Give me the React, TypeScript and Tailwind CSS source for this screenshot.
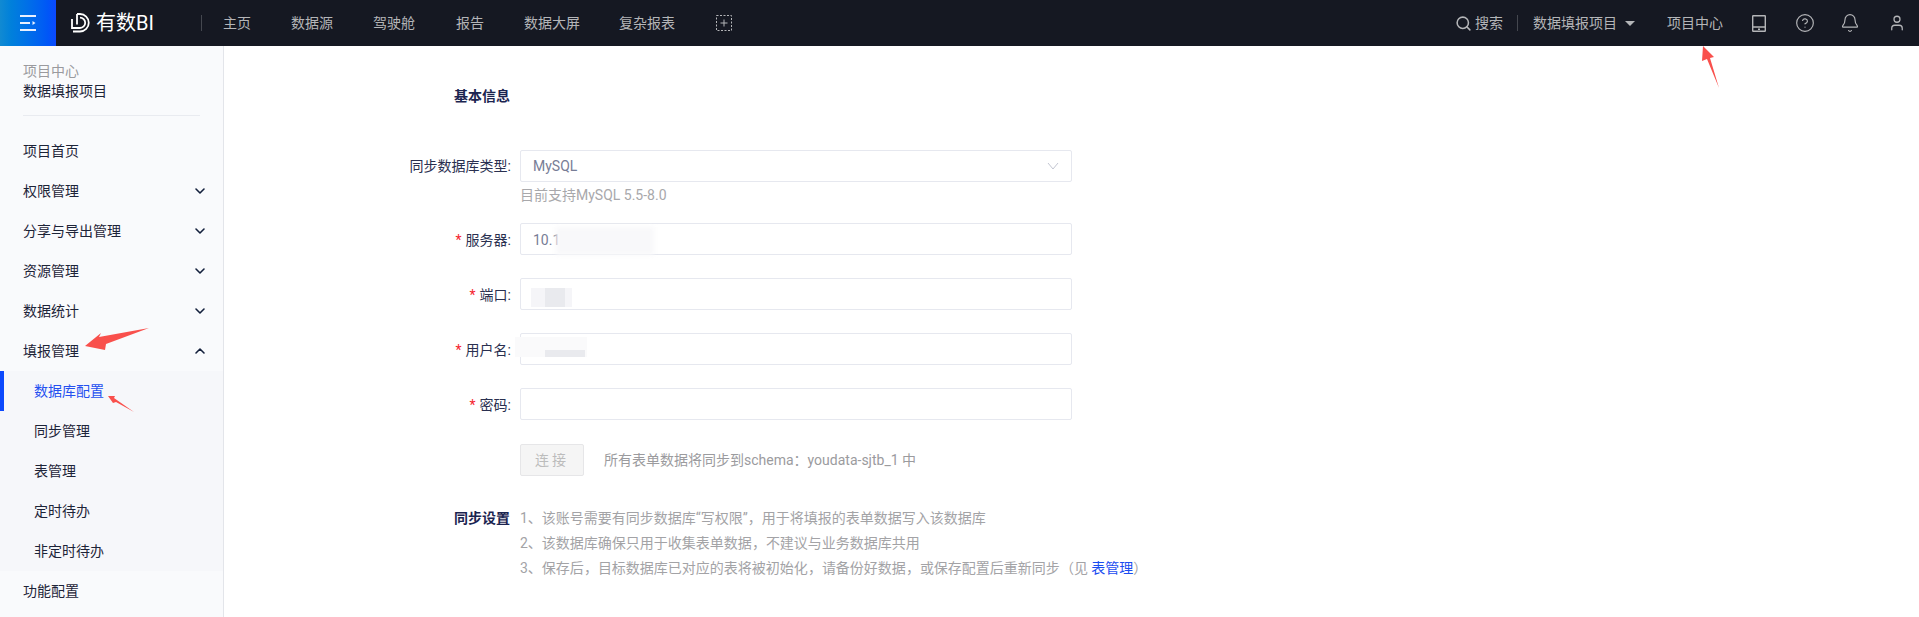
import { Bell, ChevronDown, ChevronUp, CircleHelp, Search, User } from "lucide-react";

const navItems = [
  { label: "主页", className: "ml-[21px] w-[68px]" },
  { label: "数据源", className: "w-[82px]" },
  { label: "驾驶舱", className: "w-[83px]" },
  { label: "报告", className: "w-[68px]" },
  { label: "数据大屏", className: "w-[95px]" },
  { label: "复杂报表", className: "w-[97px]" },
];

const menuItems = ["权限管理", "分享与导出管理", "资源管理", "数据统计"];
const subItems = ["同步管理", "表管理", "定时待办", "非定时待办"];

// 全角标点
const COMMA = "\uFF0C";
const COLON = "\uFF1A";
const LEFT_PAREN = "\uFF08";
const RIGHT_PAREN = "\uFF09";

function Header() {
  return (
    <header className="flex h-[46px] shrink-0 items-center bg-[#151822] text-[14px] text-[#b4b5b8]">
      <div className="flex h-full w-[56px] items-center justify-center bg-gradient-to-r from-[#118ad2] to-[#0c49fd]">
        <svg width="16" height="16" viewBox="0 0 16 16" fill="#e8f0ff">
          <rect x="0" y="0" width="16" height="2" />
          <rect x="0" y="7" width="10" height="2" />
          <path d="M12.5 6l3 2-3 2z" />
          <rect x="0" y="14" width="16" height="2" />
        </svg>
      </div>
      <svg className="ml-[15px]" width="20" height="20" viewBox="0 0 20 20" fill="none" stroke="#fff" strokeWidth="1.8">
        <path d="M6 1h3a8.5 8.5 0 0 1 0 17.5H2" />
        <path d="M1 6v9h8a5.2 5.2 0 0 0 0-10.4" />
        <path d="M6 1v10.5" />
      </svg>
      <span className="ml-[5px] text-[20px] leading-none text-white">有数BI</span>
      <div className="ml-[47px] h-[16px] w-px bg-[#44474f]" />
      {navItems.map((item) => (
        <span key={item.label} className={item.className}>
          {item.label}
        </span>
      ))}
      <svg width="16" height="16" viewBox="0 0 16 16" fill="none" stroke="#b4b5b8">
        <rect x="0.5" y="0.5" width="15" height="15" strokeDasharray="2 1.5" />
        <path d="M8 4.5v7M4.5 8h7" />
      </svg>

      <div className="ml-auto flex items-center">
        <Search size={17} strokeWidth={2.2} />
        <span className="ml-[3px]">搜索</span>
        <div className="ml-[14px] h-[16px] w-px bg-[#44474f]" />
        <span className="ml-[15px]">数据填报项目</span>
        <span className="ml-[8px] h-0 w-0 border-x-[5px] border-t-[5px] border-x-transparent border-t-[#b4b5b8]" />
        <span className="ml-[32px]">项目中心</span>
        <svg className="ml-[29px]" width="14" height="17" viewBox="0 0 14 17" fill="none" stroke="#b4b5b8" strokeWidth="1.4">
          <rect x="0.7" y="0.7" width="12.6" height="15.6" rx="0.5" />
          <path d="M0.7 12h12.6M6 14.2h2" />
        </svg>
        <CircleHelp className="ml-[29px]" size={20} strokeWidth={1.4} />
        <Bell className="ml-[25px]" size={20} strokeWidth={1.4} />
        <User className="ml-[28px] mr-[13px]" size={18} strokeWidth={1.7} />
      </div>
    </header>
  );
}

function Sidebar() {
  return (
    <aside className="w-[224px] shrink-0 border-r border-[#e3e5ea] bg-[#f9fafc] text-[14px] text-[#1d2438]">
      <div className="mx-[23px] h-[70px] border-b border-[#e9ebf0] pt-[15px] leading-[20px]">
        <div className="text-[#9a9a9e]">项目中心</div>
        <div>数据填报项目</div>
      </div>
      <div className="mt-[15px]">
        <div className="flex h-[40px] items-center pl-[23px]">项目首页</div>
        {menuItems.map((item) => (
          <div key={item} className="flex h-[40px] items-center justify-between pl-[23px] pr-[15px]">
            {item}
            <ChevronDown size={16} strokeWidth={2.4} className="text-[#14203c]" />
          </div>
        ))}
        <div className="flex h-[40px] items-center justify-between pl-[23px] pr-[15px]">
          填报管理
          <ChevronUp size={16} strokeWidth={2.4} className="text-[#14203c]" />
        </div>
        <div className="bg-[#f6f7fa]">
          <div className="flex h-[40px] items-center border-l-[4px] border-[#0c49fd] pl-[30px] text-[#2450f0]">数据库配置</div>
          {subItems.map((item) => (
            <div key={item} className="flex h-[40px] items-center pl-[34px]">
              {item}
            </div>
          ))}
        </div>
        <div className="flex h-[40px] items-center pl-[23px]">功能配置</div>
      </div>
    </aside>
  );
}

function Field({ label, value, required = true }: { label: string; value?: string; required?: boolean }) {
  return (
    <div className="flex h-[32px] items-center">
      <label className="w-[115px] pr-[2px] pt-px text-right text-[#2a3050]">
        {required && <span className="mr-[4px] text-[#f5222d]">*</span>}
        {label}:
      </label>
      <div className="ml-[7px] flex h-[32px] w-[552px] items-center rounded-[2px] border border-[#e6e8ef] px-[12px] pt-px text-[#777d96]">
        {value}
      </div>
    </div>
  );
}

function Arrow({ className, width, height, points }: { className: string; width: number; height: number; points: string }) {
  return (
    <svg className={`absolute ${className}`} width={width} height={height} viewBox={`0 0 ${width} ${height}`}>
      <polygon points={points} fill="#f9504c" />
    </svg>
  );
}

function MainForm() {
  return (
    <main className="flex-1 bg-white pl-[174px] pt-[40px] text-[14px] leading-[20px]">
      <div className="ml-[56px] font-bold text-[#1b2450]">基本信息</div>
      <div className="mt-[44px] flex h-[32px] items-center">
        <label className="w-[115px] pr-[2px] text-right text-[#2a3050]">同步数据库类型:</label>
        <div className="ml-[7px] flex h-[32px] w-[552px] items-center justify-between rounded-[2px] border border-[#e6e8ef] px-[12px] text-[#777d96]">
          MySQL
          <svg width="12" height="8" viewBox="0 0 12 8" fill="none" stroke="#c3c6d2">
            <path d="M1 1l5 6 5-6" />
          </svg>
        </div>
      </div>
      <div className="ml-[122px] mt-[3px] h-[38px] text-[#a8a8ab]">目前支持MySQL 5.5-8.0</div>
      <div className="flex flex-col gap-[23px]">
        <Field label="服务器" value="10.1" />
        <Field label="端口" />
        <Field label="用户名" />
        <Field label="密码" />
      </div>
      <div className="ml-[122px] mt-[24px] flex items-center">
        <button className="h-[32px] w-[64px] rounded-[2px] border border-[#e6e6e8] bg-[#f5f5f5] tracking-[3px] text-[#bcbcbc]">连接</button>
        <span className="ml-[20px] text-[#9b9b9e]">所有表单数据将同步到schema{COLON}youdata-sjtb_1 中</span>
      </div>
      <div className="mt-[30px] flex leading-[25px]">
        <div className="ml-[56px] w-[56px] font-bold text-[#1b2450]">同步设置</div>
        <div className="ml-[10px] text-[#a3a3a6]">
          <div>1、该账号需要有同步数据库“写权限”{COMMA}用于将填报的表单数据写入该数据库</div>
          <div>2、该数据库确保只用于收集表单数据{COMMA}不建议与业务数据库共用</div>
          <div>
            3、保存后{COMMA}目标数据库已对应的表将被初始化{COMMA}请备份好数据{COMMA}或保存配置后重新同步{LEFT_PAREN}见 <span className="text-[#1a4cf0]">表管理</span>{RIGHT_PAREN}
          </div>
        </div>
      </div>
    </main>
  );
}

export default function App() {
  return (
    <div className="relative flex h-[617px] w-[1919px] flex-col overflow-hidden bg-white" style={{ fontFamily: 'Roboto, "Noto Sans CJK SC", sans-serif' }}>
      <Header />
      <div className="flex min-h-0 flex-1">
        <Sidebar />
        <MainForm />
      </div>

      {/* 打码区域 */}
      <div className="absolute left-[556px] top-[227px] h-[28px] w-[98px] bg-[#f8f8fa] blur-[2px]" />
      <div className="absolute left-[531px] top-[288px] h-[19px] w-[41px] bg-[#f5f5f8]" />
      <div className="absolute left-[545px] top-[288px] h-[19px] w-[20px] bg-[#e9eaee]" />
      <div className="absolute left-[515px] top-[337px] h-[20px] w-[72px] bg-[#fafafb]" />
      <div className="absolute left-[545px] top-[350px] h-[7px] w-[40px] bg-[#e9eaee]" />

      {/* 标注箭头 */}
      <Arrow className="left-[1700px] top-[46px]" width={20} height={43} points="3,0 14,11 10,12 19,42 7,13 2,15" />
      <Arrow className="left-[84px] top-[327px]" width={66} height={24} points="1,19 17,6 15,10 65,1 22,17 21,23" />
      <Arrow className="left-[107px] top-[395px]" width={28} height={18} points="1,1 8,1 7,3 27,17 9,7 6,8" />
    </div>
  );
}
